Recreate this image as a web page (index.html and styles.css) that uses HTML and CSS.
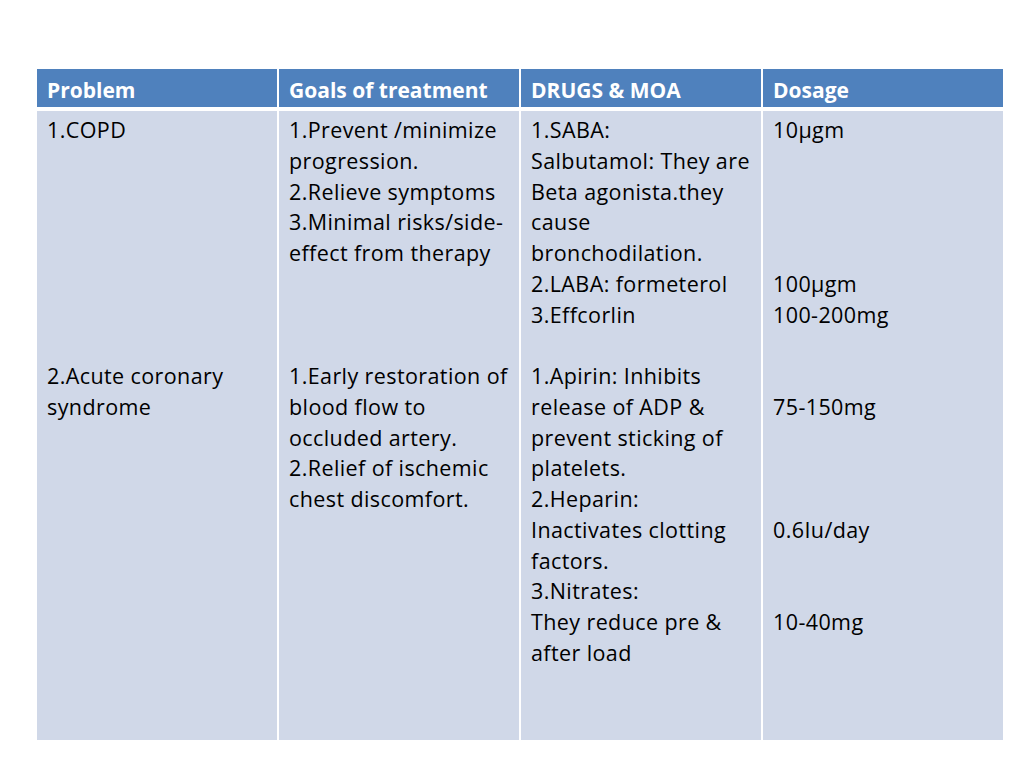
FILE: index.html
```html
<!DOCTYPE html>
<html>
<head>
<meta charset="utf-8">
<link rel="stylesheet" href="styles.css">
</head>
<body>
<div class="slide">
  <div class="table">
    <div class="th">Problem</div>
    <div class="th">Goals of treatment</div>
    <div class="th">DRUGS &amp; MOA</div>
    <div class="th">Dosage</div>
    <div class="td">1.COPD<br><br><br><br><br><br><br><br>2.Acute coronary<br>syndrome</div>
    <div class="td">1.Prevent /minimize<br>progression.<br>2.Relieve symptoms<br>3.Minimal risks/side-<br>effect from therapy<br><br><br><br>1.Early restoration of<br>blood flow to<br>occluded artery.<br>2.Relief of ischemic<br>chest discomfort.</div>
    <div class="td">1.SABA:<br>Salbutamol: They are<br>Beta agonista.they<br>cause<br>bronchodilation.<br>2.LABA: formeterol<br>3.Effcorlin<br><br>1.Apirin: Inhibits<br>release of ADP &amp;<br>prevent sticking of<br>platelets.<br>2.Heparin:<br>Inactivates clotting<br>factors.<br>3.Nitrates:<br>They reduce pre &amp;<br>after load</div>
    <div class="td">10µgm<br><br><br><br><br>100µgm<br>100-200mg<br><br><br>75-150mg<br><br><br><br>0.6Iu/day<br><br><br>10-40mg</div>
  </div>
</div>
</body>
</html>
```
FILE: styles.css
```css
html, body {
  margin: 0;
  padding: 0;
  background: #ffffff;
}
.slide {
  width: 1024px;
  height: 768px;
  padding: 69px 0 0 37px;
  box-sizing: border-box;
}
.table {
  width: 966px;
  display: grid;
  grid-template-columns: 240px 240px 240px 240px;
  grid-template-rows: 38px 629px;
  column-gap: 2px;
  row-gap: 4px;
  font-family: "Open Sans", "Liberation Sans", sans-serif;
  line-height: 30.75px;
  white-space: nowrap;
  font-variant-ligatures: none;
}
.th {
  background: #4f81bd;
  color: #ffffff;
  font-weight: bold;
  font-size: 21px;
  padding: 6px 10px 0 10px;
}
.td {
  background: #d0d8e8;
  color: #000000;
  font-size: 21.5px;
  letter-spacing: 0.4px;
  padding: 4px 10px 0 10px;
}
```
